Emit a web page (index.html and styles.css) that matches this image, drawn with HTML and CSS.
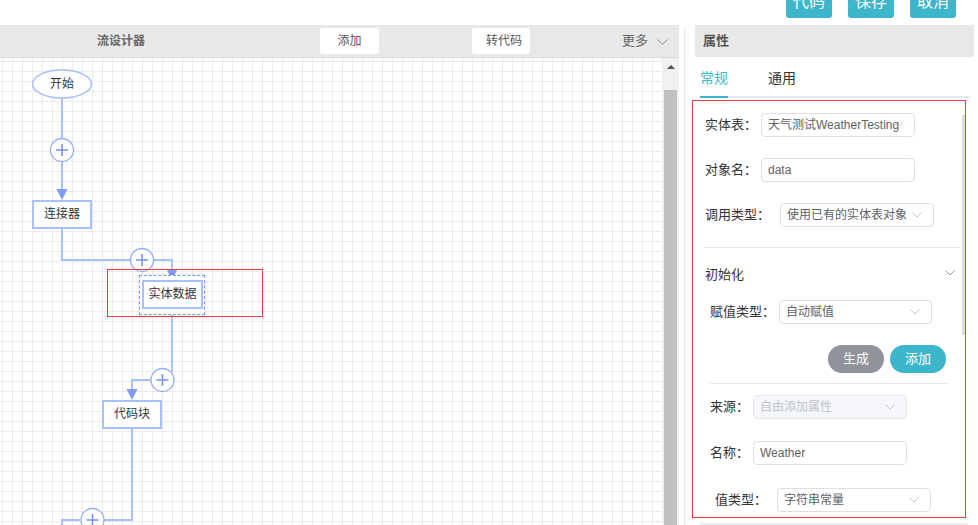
FILE: index.html
```html
<!DOCTYPE html>
<html lang="zh-CN">
<head>
<meta charset="utf-8">
<title>流设计器</title>
<link rel="stylesheet" href="styles.css">
</head>
<body>
<div class="topbar">
  <div class="top-btn">代码</div>
  <div class="top-btn">保存</div>
  <div class="top-btn">取消</div>
</div>
<div class="main">
  <section class="designer">
    <div class="designer-head">
      <div class="title">流设计器</div>
      <div class="header-btn btn-add">添加</div>
      <div class="header-btn btn-code">转代码</div>
      <div class="more">更多</div>
      <svg class="more-chev" width="11" height="6" viewBox="0 0 11 6"><polyline points="0.5,0.5 5.5,5.2 10.5,0.5" fill="none" stroke="#8a8a8a" stroke-width="1"/></svg>
    </div>
    <div class="canvas-row">
      <div class="canvas">
        <svg class="wires" width="662" height="467" viewBox="0 0 662 467">
          <g fill="none" stroke="#a8c0fb" stroke-width="2">
            <line x1="62" y1="40" x2="62" y2="80"/>
            <line x1="62" y1="104" x2="62" y2="133"/>
            <polyline points="62,171 62,202 130,202"/>
            <polyline points="154,202 172,202 172,213"/>
            <line x1="172" y1="251" x2="172" y2="314"/>
            <polyline points="150,322 132,322 132,333"/>
            <polyline points="132,371 132,462 104,462"/>
            <polyline points="80,462 62,462 62,470"/>
          </g>
          <ellipse cx="62" cy="26" rx="29.5" ry="14" fill="#fff" stroke="#a5befa" stroke-width="1.5"/>
          <g fill="#7f9df6">
            <polygon points="56.5,131 67.5,131 62,142"/>
            <polygon points="166.5,211 177.5,211 172,222"/>
            <polygon points="126.5,331 137.5,331 132,342"/>
          </g>
          <g fill="#fff" stroke="#92acf8" stroke-width="1.3">
            <circle cx="62" cy="92" r="11.5"/>
            <circle cx="142" cy="202" r="11.5"/>
            <circle cx="162.5" cy="322" r="11.5"/>
            <circle cx="92.5" cy="462" r="11.5"/>
          </g>
          <g stroke="#7593f4" stroke-width="1.6">
            <path d="M56 92h12M62 86v12"/>
            <path d="M136 202h12M142 196v12"/>
            <path d="M156.5 322h12M162.5 316v12"/>
            <path d="M86.5 462h12M92.5 456v12"/>
          </g>
        </svg>
        <div class="node-label start">开始</div>
        <div class="node n-connector">连接器</div>
        <div class="sel-box"></div>
        <div class="node n-entity">实体数据</div>
        <div class="node n-code">代码块</div>
        <div class="hl-box"></div>
      </div>
      <div class="vscroll">
        <div class="vscroll-arrow"></div>
        <div class="vscroll-thumb"></div>
      </div>
    </div>
  </section>

  <aside class="props">
    <div class="props-head">属性</div>
    <div class="tabs">
      <div class="tab active">常规</div>
      <div class="tab">通用</div>
    </div>
    <div class="form-box">
      <div class="inner-thumb"></div>
      <div class="row r1">
        <div class="lbl w56">实体表：</div>
        <div class="field">天气测试WeatherTesting<svg class="chev" width="10" height="6" viewBox="0 0 10 6"><polyline points="0.5,0.5 5,5 9.5,0.5" fill="none" stroke="#c0c4cc" stroke-width="1"/></svg></div>
      </div>
      <div class="row r2">
        <div class="lbl w56">对象名：</div>
        <div class="field">data</div>
      </div>
      <div class="row r3">
        <div class="lbl w75">调用类型：</div>
        <div class="field">使用已有的实体表对象<svg class="chev" width="10" height="6" viewBox="0 0 10 6"><polyline points="0.5,0.5 5,5 9.5,0.5" fill="none" stroke="#c0c4cc" stroke-width="1"/></svg></div>
      </div>
      <div class="divider d1"></div>
      <div class="sect">
        <span>初始化</span>
        <svg width="10" height="6" viewBox="0 0 10 6"><polyline points="0.5,0.5 5,5 9.5,0.5" fill="none" stroke="#909399" stroke-width="1"/></svg>
      </div>
      <div class="row r4 in2">
        <div class="lbl w69">赋值类型：</div>
        <div class="field f153">自动赋值<svg class="chev" width="10" height="6" viewBox="0 0 10 6"><polyline points="0.5,0.5 5,5 9.5,0.5" fill="none" stroke="#c0c4cc" stroke-width="1"/></svg></div>
      </div>
      <div class="btn-row">
        <div class="pill gray">生成</div>
        <div class="pill teal">添加</div>
      </div>
      <div class="divider d2"></div>
      <div class="row r5 in2">
        <div class="lbl w43">来源：</div>
        <div class="field disabled">自由添加属性<svg class="chev" width="10" height="6" viewBox="0 0 10 6"><polyline points="0.5,0.5 5,5 9.5,0.5" fill="none" stroke="#c0c4cc" stroke-width="1"/></svg></div>
      </div>
      <div class="row r6 in2">
        <div class="lbl w43">名称：</div>
        <div class="field">Weather</div>
      </div>
      <div class="row in3">
        <div class="lbl w62">值类型：</div>
        <div class="field">字符串常量<svg class="chev" width="10" height="6" viewBox="0 0 10 6"><polyline points="0.5,0.5 5,5 9.5,0.5" fill="none" stroke="#c0c4cc" stroke-width="1"/></svg></div>
      </div>
    </div>
    <div class="props-foot"></div>
  </aside>
</div>
</body>
</html>
```
FILE: styles.css
```css
* { box-sizing: border-box; }

body {
  margin: 0;
  width: 978px;
  height: 525px;
  overflow: hidden;
  background: #fff;
  color: #333;
  font-family: "Liberation Sans", "Noto Sans CJK SC", sans-serif;
}

/* top action bar */
.topbar {
  height: 25px;
  display: flex;
  justify-content: flex-end;
  gap: 16px;
  padding-right: 22px;
}
.top-btn {
  width: 46px;
  height: 32px;
  margin-top: -14px;
  background: #3db6cc;
  color: #fff;
  border-radius: 3px;
  font-size: 16px;
  line-height: 32px;
  text-align: center;
}

.main {
  display: flex;
  height: 500px;
}

/* designer (left) */
.designer {
  width: 679px;
  display: flex;
  flex-direction: column;
}
.designer-head {
  height: 33px;
  flex: none;
  background: #e8e8e8;
  border-bottom: 1px solid #d9d9d9;
  display: flex;
  align-items: center;
  font-size: 12px;
}
.title {
  margin-left: 97px;
  width: 48px;
  font-weight: bold;
  color: #666;
  line-height: 16px;
}
.header-btn {
  height: 26px;
  background: #fff;
  border-radius: 3px;
  line-height: 26px;
  text-align: center;
  color: #555;
}
.btn-add { margin-left: 175px; width: 59px; }
.btn-code { margin-left: 93px; width: 58px; padding-left: 6px; }
.more {
  margin-left: 92px;
  font-size: 13px;
  color: #666;
  line-height: 16px;
}
.more-chev { margin-left: 9px; margin-top: 1px; }

.canvas-row {
  flex: 1;
  display: flex;
  min-height: 0;
}
.canvas {
  flex: 1;
  position: relative;
  overflow: hidden;
  background-color: #fff;
  background-image:
    linear-gradient(to right, #ebebeb 1px, transparent 1px),
    linear-gradient(to bottom, #ebebeb 1px, transparent 1px);
  background-size: 10px 10px;
  background-position: 2px 3px;
}
.wires {
  position: absolute;
  left: 0;
  top: 0;
}
.node-label {
  position: absolute;
  font-size: 12px;
  line-height: 16px;
  color: #333;
  text-align: center;
}
.start { left: 32px; top: 18px; width: 60px; }
.node {
  position: absolute;
  height: 29px;
  border: 2px solid #a8c0fb;
  background: #fff;
  font-size: 12px;
  line-height: 25px;
  text-align: center;
  color: #333;
}
.n-connector { left: 32px; top: 142px; width: 60px; }
.n-entity { left: 142px; top: 222px; width: 61px; }
.n-code { left: 102px; top: 342px; width: 60px; }
.sel-box {
  position: absolute;
  left: 139px;
  top: 217px;
  width: 66px;
  height: 40px;
  border: 1px dashed #7c98f2;
  box-shadow: 0 0 4px rgba(0, 0, 0, 0.12);
  background: #fff;
}
.hl-box {
  position: absolute;
  left: 107px;
  top: 211px;
  width: 156px;
  height: 48px;
  border: 1px solid #f23a3a;
}

.vscroll {
  width: 17px;
  flex: none;
  background: #f1f1f1;
  display: flex;
  flex-direction: column;
  align-items: center;
}
.vscroll-arrow {
  margin-top: 7px;
  width: 0;
  height: 0;
  border-left: 4px solid transparent;
  border-right: 4px solid transparent;
  border-bottom: 4px solid #505050;
}
.vscroll-thumb {
  margin-top: 21px;
  width: 13px;
  flex: 1;
  background: #c1c1c1;
}

/* properties (right) */
.props {
  margin-left: 5px;
  width: 294px;
  border-left: 1px solid #e4e7ed;
  border-top-left-radius: 7px;
  padding: 0 4px 0 10px;
  display: flex;
  flex-direction: column;
}
.props-head {
  height: 32px;
  flex: none;
  background: #e8e8e8;
  padding-left: 8px;
  font-size: 13px;
  font-weight: bold;
  color: #555;
  line-height: 32px;
}
.tabs {
  margin: 0 5px;
  height: 41px;
  flex: none;
  border-bottom: 2px solid #e4e7ed;
  display: flex;
  gap: 40px;
  align-items: flex-end;
}
.tab {
  font-size: 14px;
  line-height: 20px;
  padding-bottom: 8px;
  border-bottom: 2px solid transparent;
  margin-bottom: -2px;
  color: #333;
}
.tab.active {
  color: #3db6cc;
  border-bottom-color: #3db6cc;
}

.form-box {
  position: relative;
  margin-left: -3px;
  margin-top: 2px;
  width: 274px;
  height: 418px;
  flex: none;
  border: 1px solid #f23a3a;
  padding: 12px 0 0 12px;
  overflow: hidden;
}
.inner-thumb {
  position: absolute;
  right: 0;
  top: 14px;
  width: 3px;
  height: 220px;
  background: #dcdcdc;
}
.row {
  display: flex;
  align-items: center;
  height: 24px;
  font-size: 13px;
  color: #333;
}
.r1, .r2 { margin-bottom: 21px; }
.r4 { margin-bottom: 21px; }
.r5 { margin-bottom: 22px; }
.r6 { margin-bottom: 23px; }
.in2 { padding-left: 5px; }
.in3 { padding-left: 10px; }
.lbl { flex: none; line-height: 18px; }
.w56 { width: 56px; }
.w75 { width: 75px; }
.w69 { width: 69px; }
.w43 { width: 43px; }
.w62 { width: 62px; }

.field {
  position: relative;
  width: 154px;
  height: 24px;
  flex: none;
  border: 1px solid #dcdfe6;
  border-radius: 4px;
  padding: 0 6px;
  font-size: 12px;
  line-height: 22px;
  color: #606266;
  white-space: nowrap;
  overflow: hidden;
}
.f153 { width: 153px; }
.field.disabled {
  background: #f5f7fa;
  border-color: #e4e7ed;
  color: #c0c4cc;
}
.chev {
  position: absolute;
  right: 11px;
  top: 8px;
}

.divider {
  height: 1px;
  background: #e4e7ed;
}
.d1 { margin: 20px 5px 14px 0; }
.d2 { margin: 10px 16px 11px 5px; }

.sect {
  height: 22px;
  display: flex;
  justify-content: space-between;
  align-items: center;
  padding-right: 10px;
  font-size: 13px;
  color: #333;
  margin-bottom: 16px;
}

.btn-row {
  display: flex;
  justify-content: flex-end;
  gap: 6px;
  padding-right: 19px;
  height: 28px;
}
.pill {
  width: 56px;
  height: 28px;
  border-radius: 14px;
  color: #fff;
  font-size: 13px;
  line-height: 28px;
  text-align: center;
}
.pill.gray { background: #909399; }
.pill.teal { background: #3db6cc; }

.props-foot {
  margin: 5px 0 0 5px;
  width: 268px;
  flex: 1;
  background: #efefef;
}
```
